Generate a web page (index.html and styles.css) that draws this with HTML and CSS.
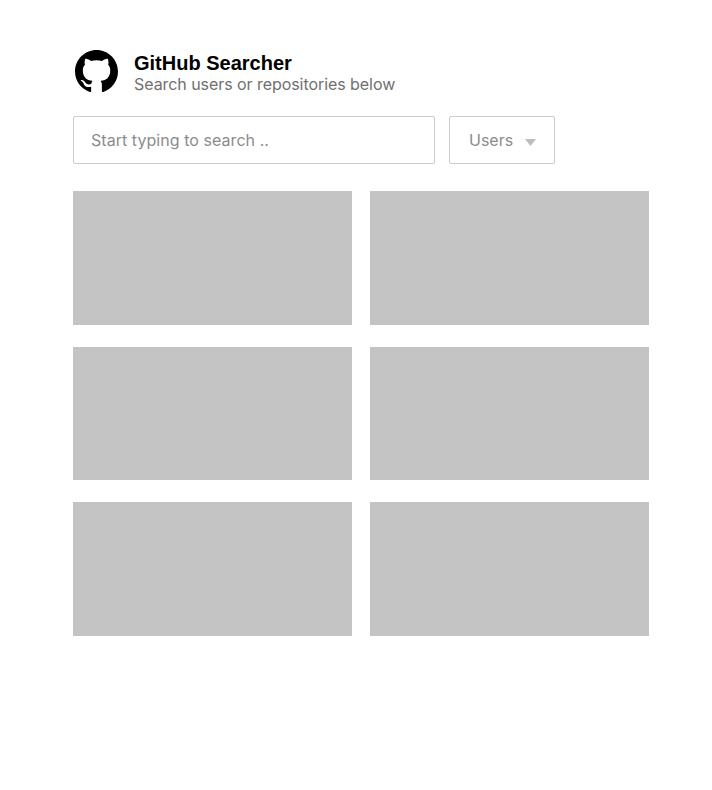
FILE: index.html
```html
<!DOCTYPE html>
<html lang="en">
<head>
<meta charset="utf-8">
<title>GitHub Searcher</title>
<link rel="stylesheet" href="styles.css">
</head>
<body>
<main class="page">
  <header class="header">
    <svg class="logo" viewBox="0 0 16 16" preserveAspectRatio="none" aria-hidden="true"><path d="M8 0C3.58 0 0 3.58 0 8c0 3.54 2.29 6.53 5.47 7.59.4.07.55-.17.55-.38 0-.19-.01-.82-.01-1.49-2.01.37-2.53-.49-2.69-.94-.09-.23-.48-.94-.82-1.13-.28-.15-.68-.52-.01-.53.63-.01 1.08.58 1.23.82.72 1.21 1.87.87 2.33.66.07-.52.28-.87.51-1.07-1.78-.2-3.64-.89-3.64-3.95 0-.87.31-1.59.82-2.15-.08-.2-.36-1.02.08-2.12 0 0 .67-.21 2.2.82.64-.18 1.32-.27 2-.27s1.36.09 2 .27c1.53-1.04 2.2-.82 2.2-.82.44 1.1.16 1.92.08 2.12.51.56.82 1.27.82 2.15 0 3.07-1.87 3.75-3.65 3.95.29.25.54.73.54 1.48 0 1.07-.01 1.93-.01 2.2 0 .21.15.46.55.38A8.01 8.01 0 0 0 16 8c0-4.42-3.58-8-8-8z"/></svg>
    <div class="titles">
      <h1 class="title">GitHub Searcher</h1>
      <p class="subtitle">Search users or repositories below</p>
    </div>
  </header>
  <div class="controls">
    <div class="search">Start typing to search ..</div>
    <div class="select"><span>Users</span><svg class="caret" viewBox="0 0 11 7" preserveAspectRatio="none" aria-hidden="true"><path d="M0 0h11L5.500 7z"/></svg></div>
  </div>
  <section class="results">
    <div class="card"></div><div class="card"></div>
    <div class="card"></div><div class="card"></div>
    <div class="card"></div><div class="card"></div>
  </section>
</main>
</body>
</html>
```
FILE: styles.css
```css
* { box-sizing: border-box; }
body { margin: 0; background: #fff; font-family: Inter, sans-serif; }
.page { width: 576px; margin: 50px 0 0 73px; }
.header { display: flex; height: 44px; padding-left: 2px; }
.logo { width: 43px; height: 43px; margin-right: 16px; }
.titles { padding-top: 2px; }
.title { margin: 0; font: bold 20px/22px "Liberation Sans", sans-serif; color: #000; white-space: nowrap; }
.subtitle { margin: 0; font-size: 16px; line-height: 21px; letter-spacing: -0.06px; color: #707070; white-space: nowrap; }
.controls { display: flex; gap: 14px; margin-top: 22px; }
.search, .select { display: flex; align-items: center; height: 48px; border: 1px solid #ccc; border-radius: 2px; font-size: 16px; color: #8c8c8c; }
.search { width: 362px; padding-left: 17px; letter-spacing: 0.05px; }
.select { width: 106px; padding-left: 19px; }
.caret { width: 11px; height: 7px; margin: 4px 0 0 12px; fill: #bdbdbd; }
.results { display: grid; grid-template-columns: 279px 279px; grid-template-rows: 134px 133px 134px; gap: 22px 18px; margin-top: 27px; }
.card { background: #c4c4c4; }
```
